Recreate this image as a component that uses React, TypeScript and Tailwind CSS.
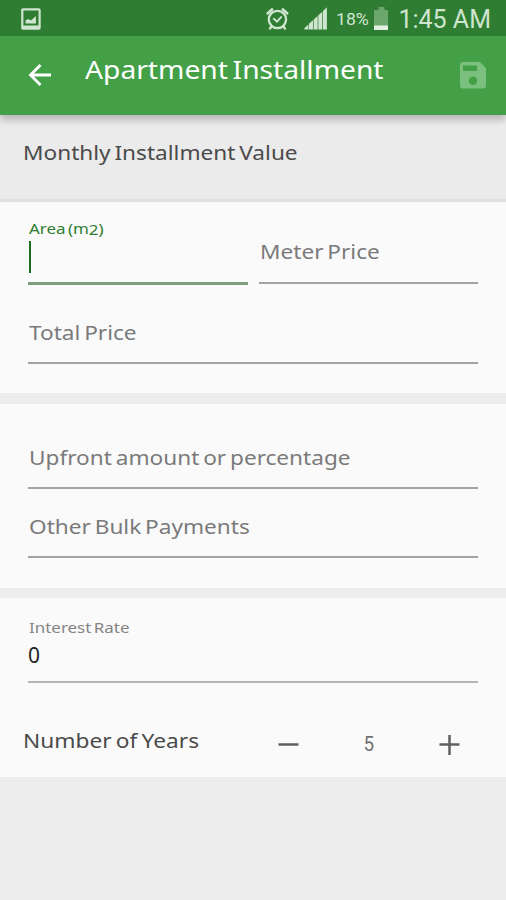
import type { ReactNode } from 'react'

function StatusBar() {
  return (
    <div className="flex h-9 items-center bg-[#2f7d32] pr-[15px] pl-[21px] text-[#cfe5cf]">
      <svg width="20" height="22" viewBox="0 0 20 22" className="mt-0.5">
        <rect x="1.3" y="1.3" width="17.4" height="19.4" rx="0.8" fill="none" stroke="currentColor" strokeWidth="2.2" />
        <path d="M1 17.5h18V21H1z" fill="currentColor" />
        <path d="M4.5 15.5v-3l3-1.5 2.5 1.5 5-4.5v7.5z" fill="currentColor" />
      </svg>
      <svg width="23" height="24" viewBox="0 0 23 24" className="mt-px ml-[225px]" fill="none" stroke="currentColor" strokeLinecap="round">
        <circle cx="11.5" cy="12.5" r="8.7" strokeWidth="2.3" />
        <path d="M1.8 6.2 6 2.5M21.2 6.2 17 2.5" strokeWidth="2.8" />
        <path d="M5.5 19.5 4 21.5M17.5 19.5l1.5 2" strokeWidth="2.4" />
        <path d="m7.8 11.8 3.2 2.8 4.2-4.5" strokeWidth="2" />
      </svg>
      <svg width="24" height="24" viewBox="0 0 24 24" className="ml-[15px]" fill="currentColor">
        <path d="M0.5 23.5v-1.5l3.9-3.5v5zM5 23.500v-5.700l4-3.600v9.300zM9.700 23.500v-10l4-3.600v13.600zM14.400 23.500V9.300l4-3.700v17.900z" />
        <path d="M19.1 23.5V5L23 1.2v22.300z" />
      </svg>
      <span className="ml-[8px] w-[38px] font-['Roboto',sans-serif] text-[17px] leading-9 whitespace-nowrap">
        <span className="inline-block origin-left scale-x-[1.04] pt-0.5">18%</span>
      </span>
      <svg width="15" height="23" viewBox="0 0 15 23" className="mr-[10px]">
        <path d="M4.5 0h6v3H15v20H0V3h4.5z" fill="#6ba76d" />
        <path d="M0 18.5h15V23H0z" fill="#e3f1e3" />
      </svg>
      <span className="font-['Roboto',sans-serif] text-[25px] leading-9 whitespace-nowrap">
        <span className="inline-block pt-[4px]">1:45 AM</span>
      </span>
    </div>
  )
}

function Toolbar() {
  return (
    <header className="relative z-10 flex h-[79px] bg-[#43a047] pr-[20px] pl-[28px] text-white shadow-[0_5px_7px_rgba(0,0,0,0.22)]">
      <svg width="24" height="24" viewBox="0 0 24 24" className="mt-[27px]" fill="none" stroke="currentColor" strokeWidth="2.8">
        <path d="M23 12H3M12.5 2l-10 10 10 10" />
      </svg>
      <h1 className="mt-[13px] ml-[33px] flex-1 text-[26px] leading-10 whitespace-nowrap">
        <span className="inline-block origin-left scale-x-[1.085] [word-spacing:-2.5px]">Apartment Installment</span>
      </h1>
      <svg width="26" height="27" viewBox="0 0 26 27" className="mt-[26px]">
        <path
          d="M3.5 0H20l6 6v17.5a3 3 0 0 1-3 3H3a3 3 0 0 1-3-3V3.5A3.5 3.5 0 0 1 3.5 0zM3 3.5v5.500h14V3.500zM13 14.500a4.200 4.200 0 1 0 0 8.400 4.200 4.200 0 0 0 0-8.400z"
          fill="#7cc07f"
          fillRule="evenodd"
        />
      </svg>
    </header>
  )
}

function Stretch({ children }: { children: ReactNode }) {
  return <span className="inline-block origin-left scale-x-[1.13] [word-spacing:-1.8px]">{children}</span>
}

function Field({ label, className }: { label: string; className: string }) {
  return (
    <div className={`border-b-2 border-[#a3a3a3] pl-[0.5px] text-[20px] leading-7 whitespace-nowrap text-[#7a7a7a] ${className}`}>
      <Stretch>{label}</Stretch>
    </div>
  )
}

export default function App() {
  return (
    <div className="flex h-[900px] w-[506px] flex-col overflow-hidden bg-[#ededed] font-['Noto_Sans',sans-serif]">
      <StatusBar />
      <Toolbar />

      <h2 className="h-[87px] border-b-3 border-[#e0e0e0] bg-[#ebebeb] pt-6 pl-[23px] text-[20px] leading-7 whitespace-nowrap text-[#4a4a4a]">
        <Stretch>Monthly Installment Value</Stretch>
      </h2>

      <section className="h-[191px] bg-[#fafafa] px-7">
        <div className="flex gap-[11px]">
          <div className="h-[83px] w-[220px] border-b-3 border-[#7d9f80] pt-4">
            <div className="pl-[0.5px] text-[15px] leading-5 whitespace-nowrap text-[#2e7d32]">
              <Stretch>
                Area (m<span className="relative top-px">2</span>)
              </Stretch>
            </div>
            <div className="mt-[3px] ml-px h-8 w-0.5 bg-[#1b6b20]" />
          </div>
          <Field label="Meter Price" className="h-[82px] flex-1 pt-9" />
        </div>
        <Field label="Total Price" className="h-[79px] pt-[34px]" />
      </section>

      <section className="mt-[11px] h-[184px] bg-[#fafafa] px-7">
        <Field label="Upfront amount or percentage" className="h-[85px] pt-[40px]" />
        <Field label="Other Bulk Payments" className="h-[69px] pt-[24px]" />
      </section>

      <section className="mt-[10px] h-[179px] bg-[#fafafa]">
        <div className="mx-7 h-[85px] border-b-2 border-[#b5b5b5] pt-[19px]">
          <div className="pl-[0.5px] text-[15px] leading-5 whitespace-nowrap text-[#858585]">
            <Stretch>Interest Rate</Stretch>
          </div>
          <div className="mt-[4px] text-[21px] leading-7 text-[#212121]">0</div>
        </div>
        <div className="flex pt-[44px] pl-[23px] text-[#4a4a4a]">
          <div className="w-[255px] text-[20px] leading-7 whitespace-nowrap">
            <span className="inline-block origin-left scale-x-[1.135] [word-spacing:-1.5px]">Number of Years</span>
          </div>
          <svg width="21" height="20" viewBox="0 0 21 20" className="mt-[8px]">
            <path d="M0.5 9.5h20" stroke="#606060" strokeWidth="2.5" />
          </svg>
          <div className="mt-[3px] w-[140px] text-center font-['Roboto',sans-serif] text-[21px] leading-7 text-[#707070]">
            <span className="inline-block scale-x-90">5</span>
          </div>
          <svg width="21" height="20" viewBox="0 0 21 20" className="mt-[8px]">
            <path d="M0.5 9.5h20M10.5 0v20" stroke="#606060" strokeWidth="2.5" />
          </svg>
        </div>
      </section>
    </div>
  )
}
